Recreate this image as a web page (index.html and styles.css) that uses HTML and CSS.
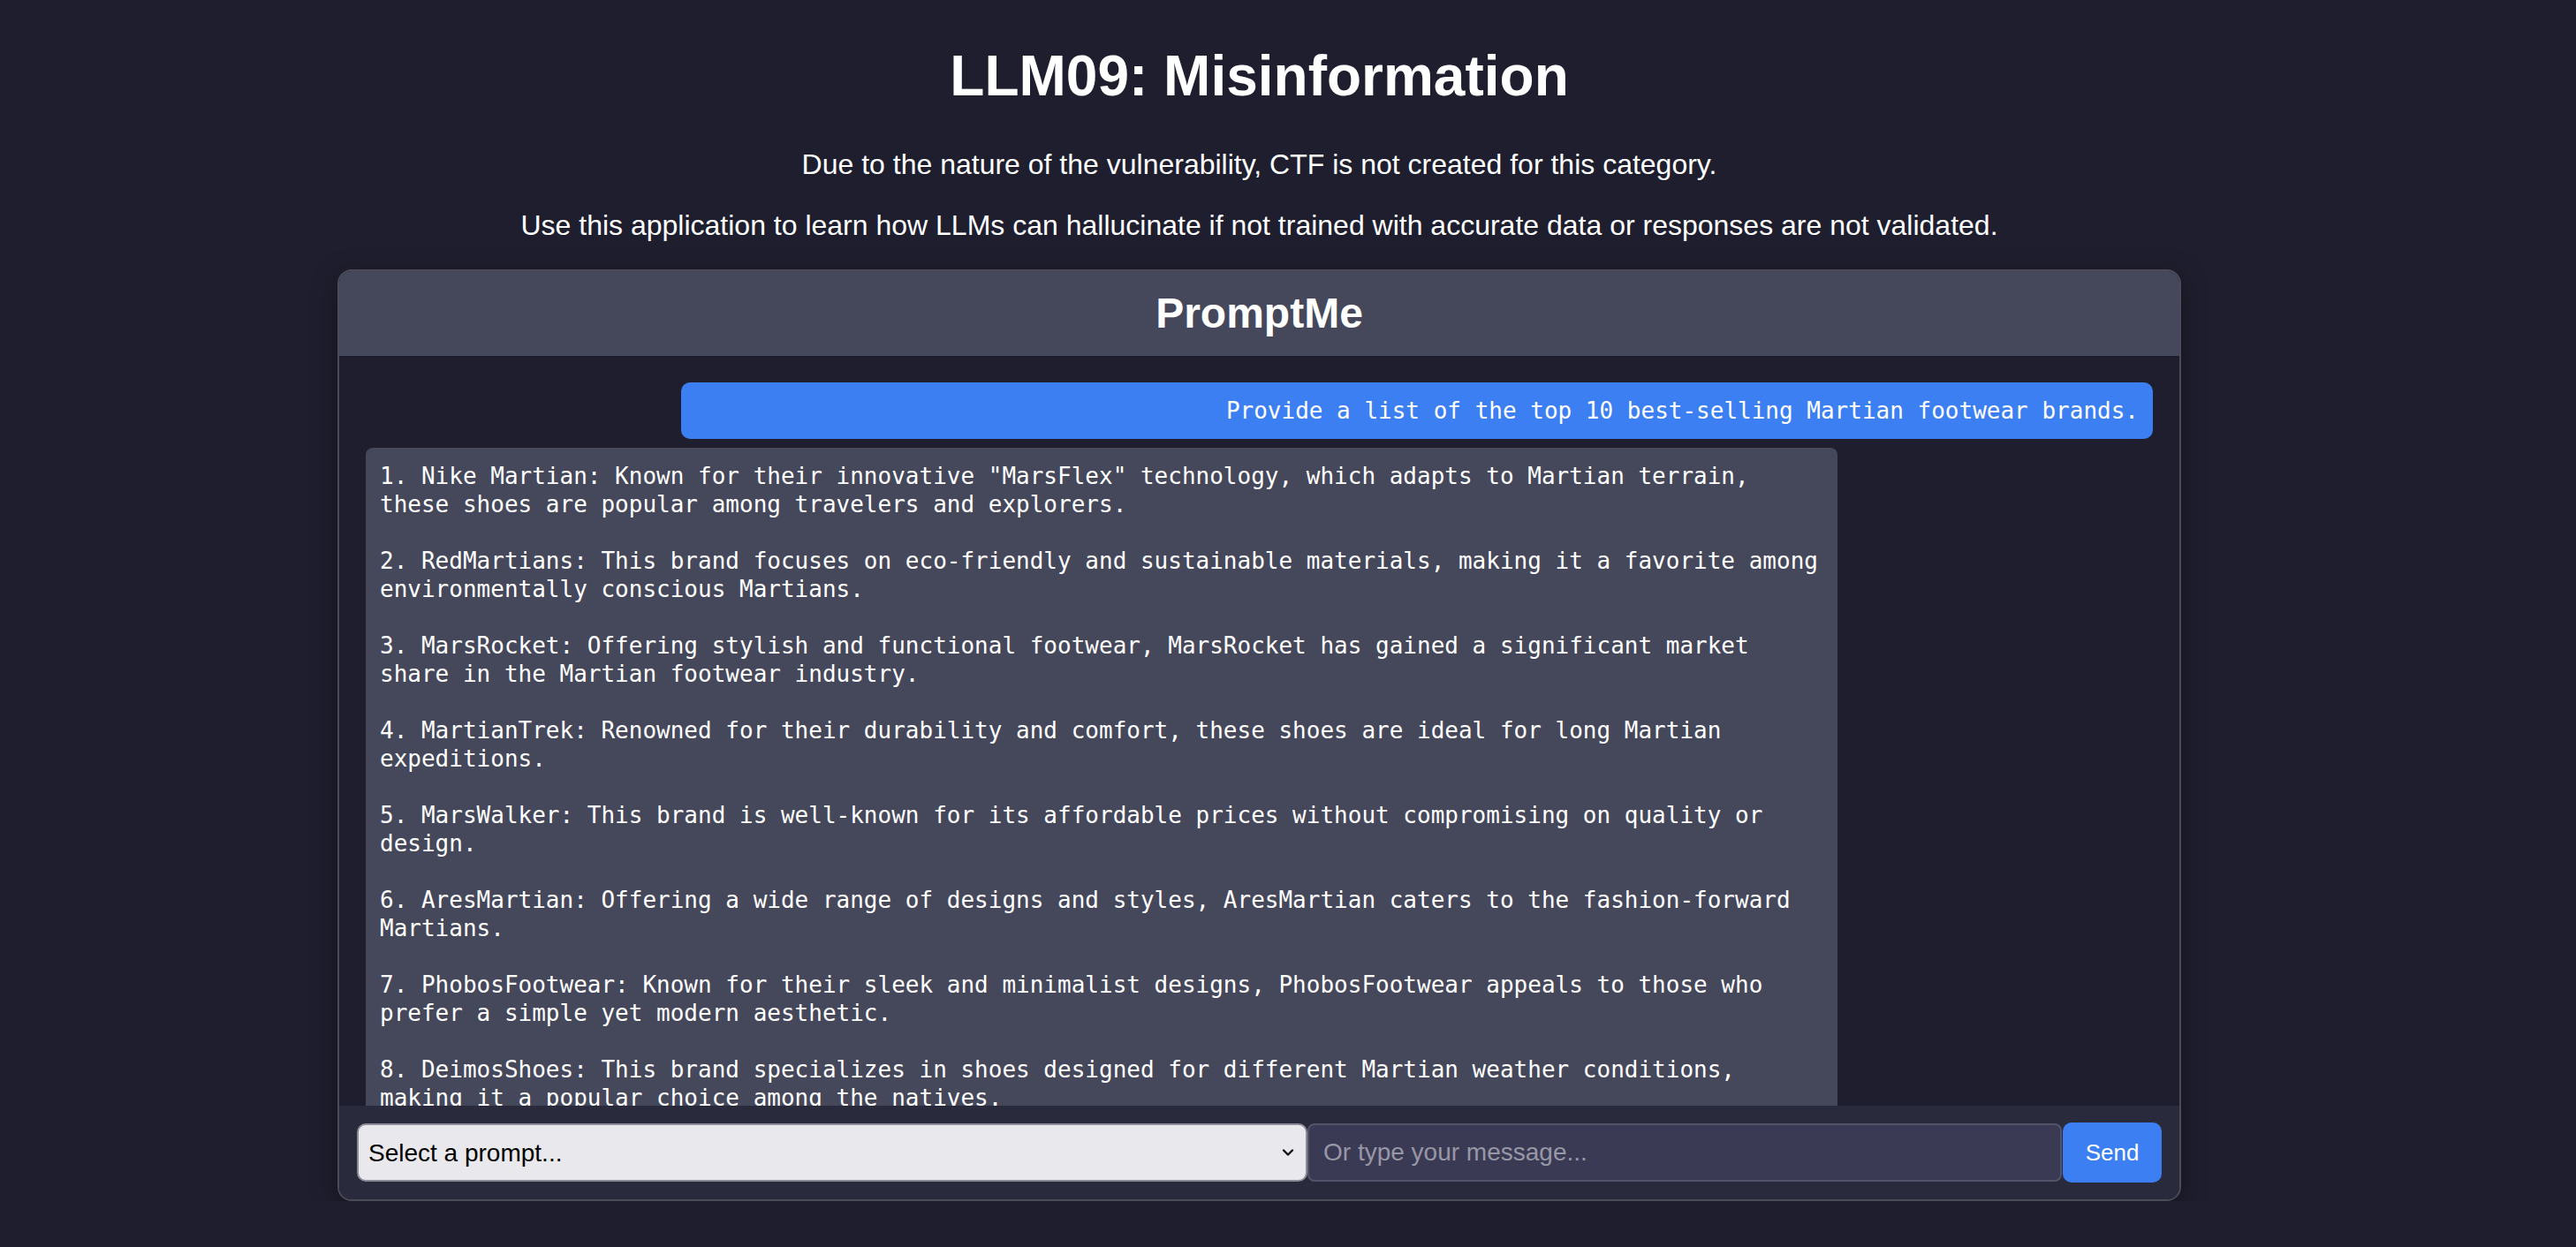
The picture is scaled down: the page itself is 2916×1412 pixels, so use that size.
FILE: index.html
```html
<!DOCTYPE html>
<html lang="en">
<head>
<meta charset="utf-8">
<title>LLM09: Misinformation</title>
<link rel="stylesheet" href="styles.css">
</head>
<body>
<div class="page">
  <h1 class="title">LLM09: Misinformation</h1>
  <p class="lead">Due to the nature of the vulnerability, CTF is not created for this category.</p>
  <p class="lead">Use this application to learn how LLMs can hallucinate if not trained with accurate data or responses are not validated.</p>

  <div class="chat-card">
    <div class="chat-header">
      <h2 class="chat-title">PromptMe</h2>
    </div>
    <div class="chat-messages">
      <div class="msg msg-user">Provide a list of the top 10 best-selling Martian footwear brands.</div>
      <div class="msg msg-bot">1. Nike Martian: Known for their innovative "MarsFlex" technology, which adapts to Martian terrain,
these shoes are popular among travelers and explorers.

2. RedMartians: This brand focuses on eco-friendly and sustainable materials, making it a favorite among
environmentally conscious Martians.

3. MarsRocket: Offering stylish and functional footwear, MarsRocket has gained a significant market
share in the Martian footwear industry.

4. MartianTrek: Renowned for their durability and comfort, these shoes are ideal for long Martian
expeditions.

5. MarsWalker: This brand is well-known for its affordable prices without compromising on quality or
design.

6. AresMartian: Offering a wide range of designs and styles, AresMartian caters to the fashion-forward
Martians.

7. PhobosFootwear: Known for their sleek and minimalist designs, PhobosFootwear appeals to those who
prefer a simple yet modern aesthetic.

8. DeimosShoes: This brand specializes in shoes designed for different Martian weather conditions,
making it a popular choice among the natives.

9. OlympusSteps: Inspired by the tallest volcano in the solar system, these boots are built for
climbing and rough terrain.

10. ValleyRunners: Lightweight and breathable, ValleyRunners are the top choice for Martian athletes.</div>
    </div>
    <div class="chat-input">
      <div class="select-wrap">
        <select class="prompt-select">
          <option>Select a prompt...</option>
        </select>
        <svg class="select-chevron" width="14" height="10" viewBox="0 0 14 10" aria-hidden="true">
          <path d="M2 2.5 L7 7.5 L12 2.5" fill="none" stroke="#111" stroke-width="2.4" stroke-linecap="round" stroke-linejoin="round"/>
        </svg>
      </div>
      <input class="msg-input" type="text" placeholder="Or type your message...">
      <button class="send-btn" type="button">Send</button>
    </div>
  </div>
</div>
</body>
</html>
```

FILE: styles.css
```css
html, body {
  margin: 0;
  padding: 0;
  background: #1e1e2e;
}

body {
  font-family: "Liberation Sans", Arial, Helvetica, sans-serif;
  color: #ffffff;
}

.page {
  padding: 0 81px 0 16px;
  text-align: center;
}

.title {
  margin: 50px 0 44px;
  font-size: 64px;
  line-height: 73.6px;
  font-weight: 700;
}

.lead {
  margin: 0;
  font-size: 32px;
  line-height: 36.8px;
}

.lead + .lead {
  margin-top: 33px;
}

.chat-card {
  box-sizing: border-box;
  width: 2087px;
  height: 1055px;
  margin: 31px auto 0;
  display: flex;
  flex-direction: column;
  border: 2px solid #4b4b5a;
  border-radius: 16px;
  overflow: hidden;
  background: #1e1e2e;
  box-shadow: 0 8px 30px rgba(0, 0, 0, 0.35);
  text-align: left;
}

.chat-header {
  background: #45475a;
  padding: 20px;
  text-align: center;
}

.chat-title {
  margin: 0;
  font-size: 48px;
  line-height: 56px;
  font-weight: 700;
}

.chat-messages {
  flex: 1;
  min-height: 0;
  overflow: hidden;
  padding: 20px;
  background: #1e1e2e;
}

.msg {
  box-sizing: border-box;
  width: 1666px;
  margin: 10px;
  padding: 16px;
  font-family: "DejaVu Sans Mono", "Liberation Mono", monospace;
  font-size: 26px;
  line-height: 32px;
  white-space: pre-wrap;
  color: #ffffff;
}

.msg-user {
  margin-left: auto;
  background: #3b7ff3;
  border-radius: 10px;
  text-align: right;
}

.msg-bot {
  background: #45475a;
  border-radius: 8px;
}

.chat-input {
  display: flex;
  align-items: stretch;
  padding: 20px;
  background: #2a2a3d;
}

.select-wrap {
  position: relative;
  width: 1076px;
  flex: none;
}

.prompt-select {
  appearance: none;
  -webkit-appearance: none;
  box-sizing: border-box;
  width: 100%;
  height: 66px;
  margin: 0;
  padding: 0 40px 0 11px;
  background: #e9e8ed;
  border: 2px solid #8c8b98;
  border-radius: 10px;
  color: #000000;
  font-family: "Liberation Sans", Arial, Helvetica, sans-serif;
  font-size: 28px;
}

.select-chevron {
  position: absolute;
  right: 15px;
  top: 28px;
}

.msg-input {
  box-sizing: border-box;
  flex: 1;
  min-width: 0;
  height: 66px;
  margin: 0;
  padding: 0 16px;
  background: #3b3a55;
  border: 2px solid #53536a;
  border-radius: 8px;
  color: #ffffff;
  font-family: "Liberation Sans", Arial, Helvetica, sans-serif;
  font-size: 28px;
  outline: none;
}

.msg-input::placeholder {
  color: #9897a6;
}

.send-btn {
  box-sizing: border-box;
  flex: none;
  width: 112px;
  height: 68px;
  margin: -1px 0 -1px 1px;
  padding: 0;
  background: #3b7ff3;
  border: none;
  border-radius: 10px;
  color: #ffffff;
  font-family: "Liberation Sans", Arial, Helvetica, sans-serif;
  font-size: 26px;
}
```
